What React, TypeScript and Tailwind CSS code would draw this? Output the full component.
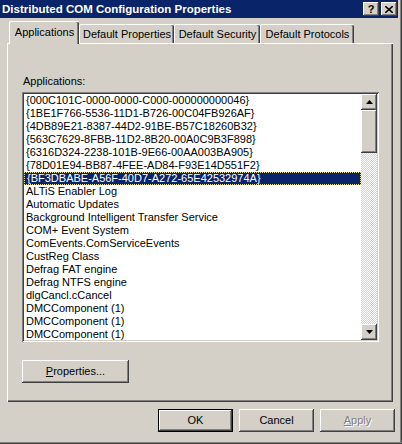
import React from 'react';

const raised =
    'shadow-[inset_-1px_-1px_0_#404040,inset_1px_1px_0_#ffffff,inset_-2px_-2px_0_#808080,inset_2px_2px_0_#d4d0c8]';
const sunken =
    'shadow-[inset_1px_1px_0_#808080,inset_-1px_-1px_0_#ffffff,inset_2px_2px_0_#404040,inset_-2px_-2px_0_#d4d0c8]';

const items = [
    '{000C101C-0000-0000-C000-000000000046}',
    '{1BE1F766-5536-11D1-B726-00C04FB926AF}',
    '{4DB89E21-8387-44D2-91BE-B57C18260B32}',
    '{563C7629-8FBB-11D2-8B20-00A0C9B3F898}',
    '{6316D324-2238-101B-9E66-00AA003BA905}',
    '{78D01E94-BB87-4FEE-AD84-F93E14D551F2}',
    '{BF3DBABE-A56F-40D7-A272-65E42532974A}',
    'ALTiS Enabler Log',
    'Automatic Updates',
    'Background Intelligent Transfer Service',
    'COM+ Event System',
    'ComEvents.ComServiceEvents',
    'CustReg Class',
    'Defrag FAT engine',
    'Defrag NTFS engine',
    'dlgCancl.cCancel',
    'DMCComponent (1)',
    'DMCComponent (1)',
    'DMCComponent (1)',
];

const selectedIndex = 6;

function Arrow({ up }: { up?: boolean }) {
    return (
        <svg width="7" height="4" viewBox="0 0 7 4">
            {up ? <polygon points="3.5,0 7,4 0,4" fill="#000" /> : <polygon points="0,0 7,0 3.5,4" fill="#000" />}
        </svg>
    );
}

function Tab({ label, width, active }: { label: string; width: number; active?: boolean }) {
    if (active) {
        return (
            <div
                className="relative z-10 -mb-px flex h-[23px] items-start justify-center rounded-t-[2px] border-t border-l border-white bg-[#d4d0c8] pt-[4px] shadow-[inset_-1px_0_0_#404040,inset_-2px_0_0_#808080]"
                style={{ width }}
            >
                {label}
            </div>
        );
    }
    return (
        <div
            className="flex h-[19px] items-start justify-center rounded-t-[2px] border-t border-l border-white bg-[#d4d0c8] pt-[3px] shadow-[inset_-1px_0_0_#404040,inset_-2px_0_0_#808080]"
            style={{ width }}
        >
            {label}
        </div>
    );
}

function Button({ children, width, isDefault, disabled }: { children: React.ReactNode; width: number; isDefault?: boolean; disabled?: boolean }) {
    return (
        <div
            className={`flex h-[23px] items-center justify-center ${raised} ${isDefault ? 'outline outline-1 outline-black outline-offset-[-1px] shadow-[inset_-2px_-2px_0_#404040,inset_2px_2px_0_#ffffff,inset_-3px_-3px_0_#808080]' : ''} ${disabled ? 'text-[#808080] [text-shadow:1px_1px_0_#ffffff]' : 'text-black'}`}
            style={{ width }}
        >
            {children}
        </div>
    );
}

export default function App() {
    return (
        <div className="relative h-[444px] w-[402px] overflow-hidden bg-[#d4d0c8] font-['Liberation_Sans',Arial,sans-serif] text-[11px] leading-[13px] text-black">
            {/* window frame, right and bottom */}
            <div className="absolute top-0 right-0 bottom-0 w-[2px] border-r border-[#404040] bg-[#808080]" />
            <div className="absolute right-0 bottom-0 left-0 h-[2px] border-b border-[#404040] bg-[#808080]" />

            <div className="mr-[4px] flex h-[18px] items-center justify-between bg-[#0a246a] pl-[2px] pr-[1px]">
                <span className="text-[11.5px] font-bold text-white">Distributed COM Configuration Properties</span>
                <div className="flex gap-[2px]">
                    <div className={`flex h-[14px] w-[16px] items-center justify-center bg-[#d4d0c8] text-[11px] font-bold leading-none ${raised}`}>
                        ?
                    </div>
                    <div className={`flex h-[14px] w-[16px] items-center justify-center bg-[#d4d0c8] ${raised}`}>
                        <svg width="8" height="7" viewBox="0 0 8 7">
                            <path d="M0 0 L8 7 M8 0 L0 7" stroke="#000" strokeWidth="1.6" />
                        </svg>
                    </div>
                </div>
            </div>

            <div className="flex flex-col px-[7px] pt-[3px]">
                <div className="flex items-end pl-[2px]">
                    <Tab label="Applications" width={70} active />
                    <Tab label="Default Properties" width={95} />
                    <Tab label="Default Security" width={86} />
                    <Tab label="Default Protocols" width={94} />
                </div>

                <div className="flex h-[359px] w-[386px] flex-col border-t border-l border-white px-[14px] pt-[31px] shadow-[inset_-1px_-1px_0_#404040,inset_-2px_-2px_0_#808080]">
                    <div className="mb-[4px] pl-[1px]">Applications:</div>
                    <div className={`flex h-[250px] w-[357px] overflow-hidden bg-white p-[2px] ${sunken}`}>
                        <div className="flex flex-1 flex-col overflow-hidden">
                            {items.map((item, i) => (
                                <div
                                    key={i}
                                    className={`h-[13px] shrink-0 whitespace-nowrap pl-[2px] ${
                                        i === selectedIndex ? 'border border-dotted border-[#e8e0a0] bg-[#0a246a] pl-[1px] leading-[11px] text-white' : ''
                                    }`}
                                >
                                    {item}
                                </div>
                            ))}
                        </div>
                        <div className="flex w-[16px] flex-col">
                            <div className={`flex h-[16px] items-center justify-center bg-[#d4d0c8] ${raised}`}>
                                <Arrow up />
                            </div>
                            <div className={`h-[43px] bg-[#d4d0c8] ${raised}`} />
                            <div className="flex-1 bg-[repeating-conic-gradient(#d4d0c8_0%_25%,#ffffff_0%_50%)] bg-[length:2px_2px]" />
                            <div className={`flex h-[16px] items-center justify-center bg-[#d4d0c8] ${raised}`}>
                                <Arrow />
                            </div>
                        </div>
                    </div>
                    <div className="mt-[18px]">
                        <Button width={107}>
                            <span>
                                <span className="underline">P</span>roperties...
                            </span>
                        </Button>
                    </div>
                </div>

                <div className="mt-[7px] flex justify-end gap-[6px]">
                    <Button width={75} isDefault>
                        OK
                    </Button>
                    <Button width={75}>Cancel</Button>
                    <Button width={75} disabled>
                        <span>
                            <span className="underline">A</span>pply
                        </span>
                    </Button>
                </div>
            </div>
        </div>
    );
}
